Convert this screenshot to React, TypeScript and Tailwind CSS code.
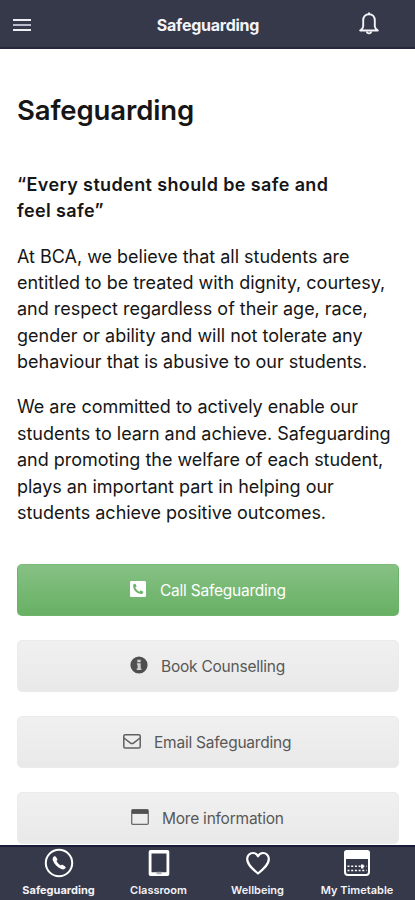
import type { ReactNode } from 'react';

const PhoneSquareIcon = () => (
  <svg width="16" height="16" viewBox="0 0 16 16">
    <rect width="16" height="16" rx="1.2" fill="#fff" />
    <path
      d="M4.7 2.8 3.1 3.7C2.8 8.9 7 13.3 12.3 13l1-1.7c.1-.3 0-.6-.3-.7l-2-1c-.3-.1-.5 0-.7.2l-.8 1C7.7 10 6 8.3 5.3 6.5l1-.8c.2-.2.3-.4.2-.7l-1-2c-.2-.3-.5-.4-.8-.2Z"
      fill="#6fb36c"
    />
  </svg>
);

const InfoIcon = () => (
  <svg width="18" height="18" viewBox="0 0 18 18">
    <circle cx="9" cy="9" r="8.6" fill="#4f4f4f" />
    <path d="M7.3 3.8h3.4v2.4H7.3zM6.900 7.200h3.800v5.300h.7V14H6.700v-1.500h.9V8.800h-.7z" fill="#cfcfcf" />
  </svg>
);

const MailIcon = () => (
  <svg width="18" height="15" viewBox="0 0 18 15" fill="none" stroke="#606060" strokeWidth="1.5">
    <rect x=".8" y=".8" width="16.4" height="13.2" rx="1.3" />
    <path d="m1 4 6.200 4.800c1.200.9 2.400.9 3.600 0L17 4" />
  </svg>
);

const WindowIcon = () => (
  <svg width="18" height="16" viewBox="0 0 18 16">
    <rect x=".7" y=".7" width="16.6" height="14.6" rx="1.2" fill="none" stroke="#6a6a6a" strokeWidth="1.3" />
    <path d="M1 .7h16v4.200H1z" fill="#505050" />
  </svg>
);

const CallCircleIcon = () => (
  <svg width="30" height="30" viewBox="0 0 30 30">
    <circle cx="15" cy="15" r="13.2" fill="none" stroke="#fff" strokeWidth="2" />
    <path
      d="M9.900 8.600c.8-.6 1.500-.5 2 .2l1.300 2.100c.4.700.2 1.200-.3 1.700l-.4.500c.9 1.800 2.300 3.300 4.200 4.400l.6-.5c.5-.4 1-.5 1.600-.1l2.200 1.500c.7.500.8 1.100.2 1.800-1.100 1.300-2.500 1.500-4 .8-3.900-1.900-6.900-4.800-8.400-8.600-.5-1.500-.2-2.900 1-3.800Z"
      fill="#fff"
    />
  </svg>
);

const TabletIcon = () => (
  <svg width="22" height="28" viewBox="0 0 22 28">
    <path
      fillRule="evenodd"
      d="M2.500 1h17A1.800 1.800 0 0 1 21.300 2.800v22.400a1.800 1.800 0 0 1-1.800 1.800h-17A1.800 1.800 0 0 1 .7 25.200V2.800A1.800 1.800 0 0 1 2.500 1Zm1 3.500v18.800h15V4.500Z"
      fill="#fff"
    />
    <path d="M8.500 22.800h5v2.400h-5z" fill="#a9abb5" />
  </svg>
);

const HeartIcon = () => (
  <svg width="26" height="26" viewBox="0 0 26 26" fill="none" stroke="#fff" strokeWidth="2.2" strokeLinejoin="round">
    <path d="M13 23.500C7.800 19.300 2.200 14.700 2.200 9a5.800 5.800 0 0 1 5.800-6c2.200 0 4 1.200 5 3.300 1-2.100 2.800-3.300 5-3.300a5.800 5.800 0 0 1 5.800 6c0 5.700-5.600 10.300-10.800 14.500Z" />
  </svg>
);

const CalendarIcon = () => (
  <svg width="28" height="28" viewBox="0 0 28 28">
    <rect x="2" y="2" width="24" height="24" rx="3" fill="none" stroke="#fff" strokeWidth="2" />
    <path d="M4 1h20a3 3 0 0 1 3 3v6H1V4a3 3 0 0 1 3-3Z" fill="#fff" />
    <path d="M4.500 17.300h19M4.500 21.500h19" stroke="#fff" strokeWidth="1.6" strokeDasharray="2 1.7" />
    <path d="M18 15.500h2.500v4H18z" fill="#fff" />
  </svg>
);

interface ActionButtonProps {
  icon: ReactNode;
  label: string;
  primary?: boolean;
  iconClass: string;
  labelClass: string;
}

function ActionButton({ icon, label, primary = false, iconClass, labelClass }: ActionButtonProps) {
  return (
    <button
      className={`flex h-[52px] w-full shrink-0 items-center rounded-[5px] border text-left text-[15.5px] tracking-[-0.23px] ${
        primary
          ? 'border-[#6eb36b] border-t-[#7dbb79] bg-linear-to-b from-[#86c184] to-[#68b064] text-white'
          : 'border-[#ebebeb] bg-linear-to-b from-[#f0f0f0] to-[#e9e9e9] text-[#585858]'
      }`}
    >
      <span className={`flex shrink-0 pb-0.5 ${iconClass}`}>{icon}</span>
      <span className={`pt-px whitespace-nowrap ${labelClass}`}>{label}</span>
    </button>
  );
}

const tabs = [
  { label: 'Safeguarding', icon: <CallCircleIcon />, className: 'w-[117px] font-bold' },
  { label: 'Classroom', icon: <TabletIcon />, className: 'w-[83px] font-semibold' },
  { label: 'Wellbeing', icon: <HeartIcon />, className: 'w-[115px] font-semibold' },
  { label: 'My Timetable', icon: <CalendarIcon />, className: 'w-[84px] font-semibold' },
];

export default function App() {
  return (
    <div className="flex h-[900px] w-[415px] flex-col overflow-hidden bg-white font-['Inter','Liberation_Sans',sans-serif] text-[#161616]">
      <header className="flex h-[49px] shrink-0 items-center justify-between border-b-2 border-[#28263d] bg-[#36394a] pt-0.5 pr-9 pl-[13px]">
        <button aria-label="Menu" className="flex w-[18px] flex-col gap-[3px]">
          <span className="h-0.5 bg-[#eeeef5]" />
          <span className="h-0.5 bg-[#b9bbcc]" />
          <span className="h-0.5 bg-[#eeeef5]" />
        </button>
        <span className="pl-[26px] text-base font-bold tracking-[-0.25px] text-[#f3f3f8]">Safeguarding</span>
        <button aria-label="Notifications" className="pb-0.5">
          <svg width="20" height="23" viewBox="0 0 20 23" fill="none" stroke="#f3f3f8" strokeWidth="1.9" strokeLinejoin="round">
            <path d="M10 2.200c-3.600 0-5.800 2.600-5.800 6.200v5.800c0 1.700-1 2.800-3 4.300h17.600c-2-1.500-3-2.600-3-4.300V8.400C15.800 4.800 13.600 2.200 10 2.200Z" />
            <path d="M10 .5v1.700M7.800 19.500c.3 2.500 4.100 2.500 4.400 0" />
          </svg>
        </button>
      </header>

      <main className="flex min-h-0 flex-1 flex-col overflow-hidden pr-4 pl-[17px]">
        <h1 className="mt-[43px] h-9 text-[27.5px] leading-9 font-semibold tracking-[-0.12px] whitespace-nowrap">Safeguarding</h1>
        <p className="mt-11 text-lg leading-[26.4px] font-semibold tracking-[0.38px] whitespace-nowrap">
          “Every student should be safe and
          <br />
          feel safe”
        </p>
        <p className="mt-[18.8px] text-lg leading-[26.4px] tracking-[-0.01px] whitespace-nowrap">
          At BCA, we believe that all students are
          <br />
          entitled to be treated with dignity, courtesy,
          <br />
          and respect regardless of their age, race,
          <br />
          gender or ability and will not tolerate any
          <br />
          behaviour that is abusive to our students.
        </p>
        <p className="mt-[18.8px] text-lg leading-[26.4px] tracking-[-0.02px] whitespace-nowrap">
          We are committed to actively enable our
          <br />
          students to learn and achieve. Safeguarding
          <br />
          and promoting the welfare of each student,
          <br />
          plays an important part in helping our
          <br />
          students achieve positive outcomes.
        </p>

        <div className="mt-[38px] flex flex-col gap-6">
          <ActionButton primary icon={<PhoneSquareIcon />} label="Call Safeguarding" iconClass="pl-[112px]" labelClass="pl-[14px]" />
          <ActionButton icon={<InfoIcon />} label="Book Counselling" iconClass="pl-[112px]" labelClass="pl-[13px]" />
          <ActionButton icon={<MailIcon />} label="Email Safeguarding" iconClass="pl-[105px]" labelClass="pl-[13px]" />
          <ActionButton icon={<WindowIcon />} label="More information" iconClass="pl-[113px]" labelClass="pl-[13px]" />
        </div>
      </main>

      <nav className="flex h-[55px] shrink-0 border-t-2 border-[#1b1d38] bg-[#36394a] text-[11px] text-[#f3f3f8]">
        {tabs.map((tab) => (
          <button key={tab.label} className={`flex flex-col items-center ${tab.className}`}>
            <span className="flex h-8 items-center">{tab.icon}</span>
            <span className="mt-[3px] leading-4 whitespace-nowrap">{tab.label}</span>
          </button>
        ))}
      </nav>
    </div>
  );
}
